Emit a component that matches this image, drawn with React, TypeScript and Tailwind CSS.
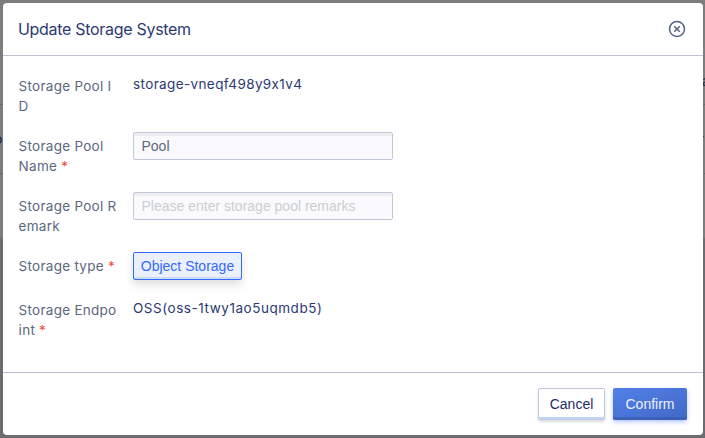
import type { ReactNode } from 'react';

function Field({ label, required, children }: { label: ReactNode; required?: boolean; children: ReactNode }) {
  return (
    <div className="flex items-start">
      <label className="w-[114.4px] shrink-0 pt-1 text-[13.5px] leading-5 tracking-[0.27px] whitespace-nowrap text-[#5b6780]">
        {label}
        {required && <span className="ml-1 text-[#f5483b]">*</span>}
      </label>
      {children}
    </div>
  );
}

const inputClass =
  'h-7 w-[260px] rounded-[2px] border border-[#c1c7dc] bg-[#fafafc] px-[7.5px] font-["Liberation_Sans",Arial,sans-serif] text-[14px] text-[#5b6780] shadow-[inset_0_3px_0_0_#ededef] outline-none placeholder:text-[#cbcdd6]';

export default function App() {
  return (
    <div className="relative h-[438px] w-[705px] overflow-hidden bg-linear-to-b from-[#7d7d7d] from-[237px] to-[#6c6c70] to-[239px] p-[3px] pr-0.5 font-[Inter,sans-serif]">
      <div className="absolute inset-x-0 top-[104px] h-px bg-[#66676c]" />
      <div className="absolute inset-x-0 top-[173px] h-px bg-[#66676c]" />
      <span className="absolute top-[131px] -left-1.5 text-[14px] leading-4 text-[#171d3a]">o</span>
      <span className="absolute top-[73px] left-[702px] text-[14px] leading-4 text-[#252a3e]">a</span>
      <div className="absolute top-[136px] left-[703px] h-px w-px bg-[#24306a]" />
      <section className="relative flex h-[432px] w-[700px] flex-col rounded-[4px] bg-white">
        <header className="flex h-[53px] shrink-0 items-center justify-between border-b border-[#c0c3cf] pr-[17px] pl-[15px]">
          <h1 className="text-[16px] leading-6 tracking-[-0.3px] text-[#2b3a72]">Update Storage System</h1>
          <button aria-label="Close">
            <svg width="18" height="18" viewBox="0 0 18 18" fill="none" stroke="#53617f">
              <circle cx="9" cy="9" r="7.5" strokeWidth="1.5" />
              <path d="M6.2 6.2l5.6 5.6M11.8 6.2l-5.6 5.6" strokeWidth="1.5" />
            </svg>
          </button>
        </header>
        <main className="flex flex-1 flex-col gap-4 pt-4 pl-[15.6px]">
          <Field label={<>Storage Pool I<br />D</>}>
            <span className="text-[13.5px] leading-6 tracking-[0.38px] text-[#2b3a72]">storage-vneqf498y9x1v4</span>
          </Field>
          <Field label={<>Storage Pool<br />Name</>} required>
            <input className={inputClass} defaultValue="Pool" />
          </Field>
          <Field label={<>Storage Pool R<br />emark</>}>
            <input className={inputClass} placeholder="Please enter storage pool remarks" />
          </Field>
          <Field label="Storage type" required>
            <button className='h-7 w-[109px] rounded-[2px] border border-[#356bfd] bg-[#eaf0fe] font-["Liberation_Sans",Arial,sans-serif] text-[14px] whitespace-nowrap text-[#356bfd] shadow-[inset_0_-2px_0_0_#cbdafb,0_5px_8px_0_#00000020]'>
              Object Storage
            </button>
          </Field>
          <Field label={<>Storage Endpo<br />int</>} required>
            <span className="text-[13.5px] leading-6 tracking-[0.54px] text-[#2b3a72]">OSS(oss-1twy1ao5uqmdb5)</span>
          </Field>
        </main>
        <footer className='flex h-[63px] shrink-0 items-start justify-end gap-2 border-t border-[#bdc3df] pt-[15px] pr-4 font-["Liberation_Sans",Arial,sans-serif] text-[14px]'>
          <button className="h-8 w-[67px] rounded-[2px] border border-[#c1c7e0] bg-white text-[#1f2d66] shadow-[inset_0_-2px_0_0_#bfd3fb,0_2px_3px_0_#00000025]">
            Cancel
          </button>
          <button className="h-8 w-[74px] rounded-[2px] bg-linear-to-br from-[#5280ea] to-[#4168c4] text-[#edf2ff] shadow-[inset_0_-3px_0_0_#3d61b7,0_2px_4px_0_#356bfd60]">
            Confirm
          </button>
        </footer>
      </section>
    </div>
  );
}
